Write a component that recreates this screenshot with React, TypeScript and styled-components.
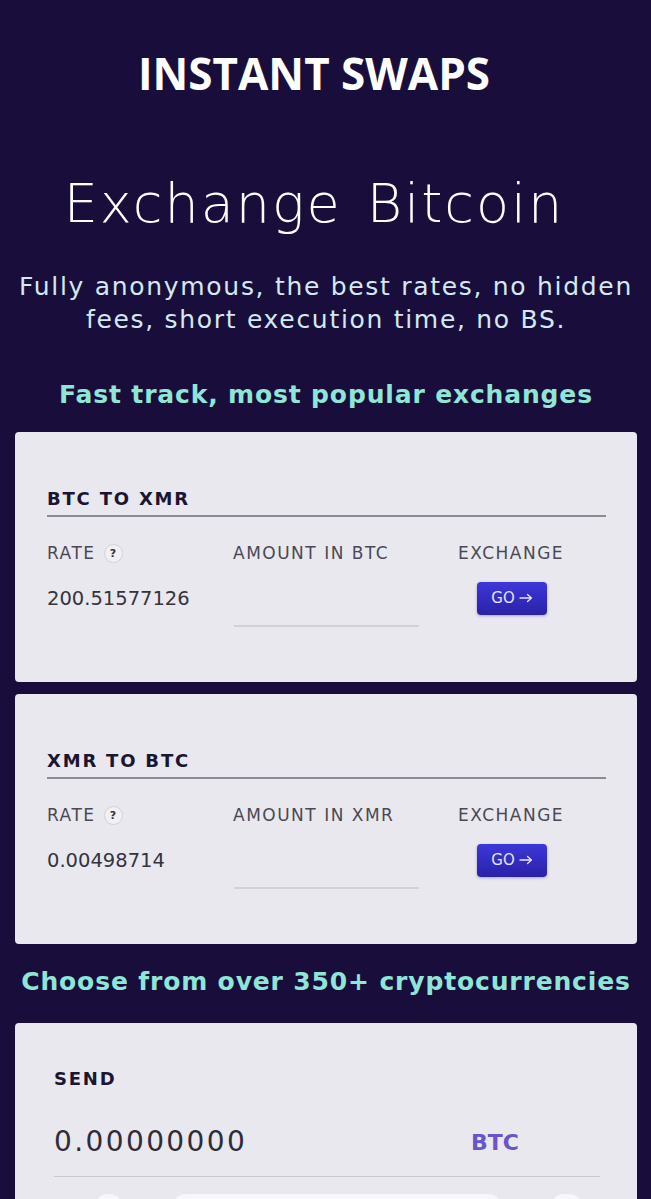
import React from "react"
import styled, { createGlobalStyle } from "styled-components"

interface Pair {
  title: string
  from: string
  rate: string
}

const pairs: Pair[] = [
  { title: "BTC TO XMR", from: "BTC", rate: "200.51577126" },
  { title: "XMR TO BTC", from: "XMR", rate: "0.00498714" },
]

const wide = `"DejaVu Sans", "Open Sans", sans-serif`

const GlobalStyle = createGlobalStyle`
  html, body {
    margin: 0;
    padding: 0;
    background: #190e3b;
  }

  body {
    font-family: "Open Sans", "Noto Sans", sans-serif;
    overflow: hidden;
  }
`

const ArrowRight = () => (
  <svg width="14" height="10" viewBox="0 0 14 10" fill="none">
    <path
      d="M1 5h11.5M8.5 1.5 12.5 5 8.5 8.5"
      stroke="currentColor"
      strokeWidth="1.3"
      strokeLinecap="round"
      strokeLinejoin="round"
    />
  </svg>
)

const PairCard: React.FunctionComponent<{ pair: Pair }> = ({ pair }) => (
  <Card>
    <CardTitle>{pair.title}</CardTitle>
    <PairGrid>
      <Label>
        RATE <Help>?</Help>
      </Label>
      <Label>AMOUNT IN {pair.from}</Label>
      <Label>EXCHANGE</Label>

      <Value>{pair.rate}</Value>
      <AmountInput aria-label={`Amount in ${pair.from}`} />
      <ButtonCell>
        <GoButton>
          GO <ArrowRight />
        </GoButton>
      </ButtonCell>
    </PairGrid>
  </Card>
)

const App: React.FunctionComponent = () => (
  <Page>
    <GlobalStyle />
    <Brand>INSTANT SWAPS</Brand>
    <Headline>Exchange Bitcoin</Headline>
    <Lead>
      Fully anonymous, the best rates, no hidden
      <br />
      fees, short execution time, no BS.
    </Lead>

    <SectionTitle>Fast track, most popular exchanges</SectionTitle>
    <CardStack>
      {pairs.map((pair) => (
        <PairCard key={pair.title} pair={pair} />
      ))}
    </CardStack>

    <SectionTitle $tight>Choose from over 350+ cryptocurrencies</SectionTitle>
    <SendCard>
      <CardTitle as="h3" $plain>
        SEND
      </CardTitle>
      <SendRow>
        <SendAmount>0.00000000</SendAmount>
        <Ticker>BTC</Ticker>
      </SendRow>
      <ChipRow>
        <Chip $w={29} />
        <Chip $w={330} />
        <Chip $w={33} />
      </ChipRow>
    </SendCard>
  </Page>
)

const Page = styled.main`
  width: 651px;
  height: 1199px;
  overflow: hidden;
  padding: 45px 14px 0 15px;
  box-sizing: border-box;
  text-align: center;
  color: #fff;
`

const Brand = styled.h1`
  margin: 0;
  padding-right: 24px;
  font-size: 44px;
  font-weight: 700;
  line-height: 56px;
`

const Headline = styled.h2`
  margin: 72px 0 0;
  padding-right: 24px;
  font-family: ${wide};
  font-size: 54px;
  font-weight: 200;
  line-height: 62px;
  letter-spacing: 2px;
  word-spacing: 6px;
`

const Lead = styled.p`
  margin: 35px 0 0;
  font-family: ${wide};
  font-size: 25px;
  line-height: 33px;
  letter-spacing: 1.7px;
  color: #d4e8f1;
  white-space: nowrap;
`

const SectionTitle = styled.h2<{ $tight?: boolean }>`
  margin: ${(p) => (p.$tight ? "22px 0 25px" : "43px 0 21px")};
  font-family: ${wide};
  font-size: 25px;
  font-weight: 700;
  line-height: 32px;
  letter-spacing: 0.85px;
  color: #8fe6d6;
  white-space: nowrap;
`

const CardStack = styled.div`
  display: flex;
  flex-direction: column;
  gap: 12px;
`

const Card = styled.section`
  background: #e9e8ef;
  border-radius: 4px;
  height: 250px;
  box-sizing: border-box;
  padding: 55px 31px 0 32px;
  text-align: left;
  color: #2b2938;
`

const CardTitle = styled.h3<{ $plain?: boolean }>`
  margin: 0;
  padding-bottom: ${(p) => (p.$plain ? "0" : "4px")};
  border-bottom: ${(p) => (p.$plain ? "none" : "2px solid #8c8a99")};
  font-family: ${wide};
  font-size: 18px;
  font-weight: 700;
  line-height: 24px;
  letter-spacing: 1.8px;
  color: #1a1533;
`

const PairGrid = styled.div`
  display: grid;
  grid-template-columns: 186px 225px 1fr;
  grid-template-rows: 36px 40px;
  row-gap: 7px;
  margin-top: 18px;
  align-items: center;
`

const Label = styled.span`
  display: flex;
  align-items: center;
  gap: 8px;
  font-family: ${wide};
  font-size: 17px;
  color: #4a4855;
  letter-spacing: 1.5px;
`

const Help = styled.span`
  display: inline-flex;
  align-items: center;
  justify-content: center;
  width: 17px;
  height: 17px;
  border-radius: 50%;
  border: 1px solid #d3d1db;
  background: #f1f0f5;
  font-size: 11px;
  font-weight: 700;
  letter-spacing: 0;
  color: #34323f;
`

const Value = styled.span`
  font-family: ${wide};
  font-size: 19.5px;
  color: #35333f;
`

const AmountInput = styled.input`
  align-self: end;
  width: 185px;
  height: 26px;
  margin: 0 0 -9px 1px;
  padding: 0;
  border: none;
  border-bottom: 2px solid #d2d0da;
  background: transparent;
  outline: none;
`

const ButtonCell = styled.div`
  padding-left: 19px;
`

const GoButton = styled.button`
  display: inline-flex;
  align-items: center;
  justify-content: center;
  gap: 4px;
  width: 70px;
  height: 33px;
  padding: 0;
  border: none;
  border-radius: 4px;
  background: linear-gradient(180deg, #3d37da 0%, #2a21a6 100%);
  box-shadow: 0 1px 3px rgba(40, 30, 140, 0.35);
  font-family: ${wide};
  font-size: 15px;
  color: #e6e4ff;
`

const SendCard = styled.section`
  background: #e9e8ef;
  border-radius: 4px 4px 0 0;
  padding: 44px 37px 0 39px;
  text-align: left;
`

const SendRow = styled.div`
  display: flex;
  align-items: center;
  justify-content: space-between;
  margin-top: 33px;
  padding: 0 81px 16px 0;
  border-bottom: 1px solid #c9c7d2;
`

const SendAmount = styled.span`
  font-family: ${wide};
  font-size: 28px;
  line-height: 36px;
  color: #2e2c39;
  letter-spacing: 2.4px;
`

const Ticker = styled.span`
  font-family: ${wide};
  font-size: 22px;
  font-weight: 700;
  color: #6a55c8;
`

const ChipRow = styled.div`
  display: flex;
  justify-content: space-between;
  margin: 17px 17px 0 40px;
`

const Chip = styled.span<{ $w: number }>`
  width: ${(p) => p.$w}px;
  height: 30px;
  border-radius: 14px;
  background: #f7f6fa;
`

export default App
